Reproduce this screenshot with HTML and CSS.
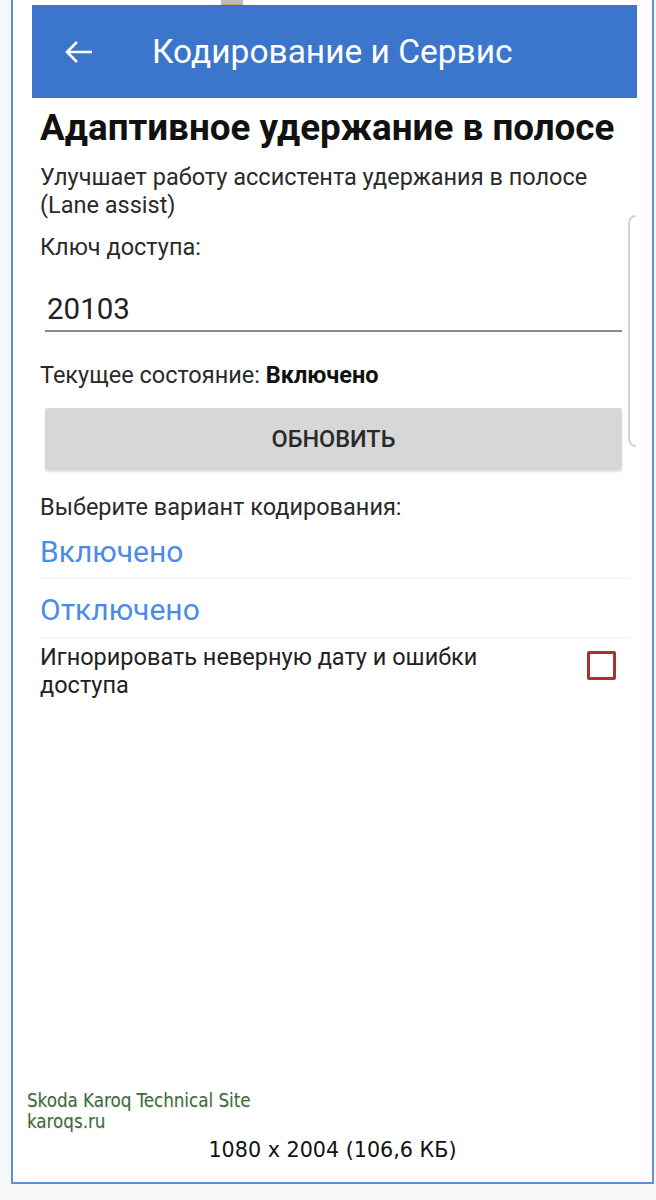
FILE: index.html
```html
<!DOCTYPE html>
<html lang="ru">
<head>
    <meta charset="UTF-8">
    <meta name="viewport" content="width=device-width, initial-scale=1.0">
    <title>Кодирование и Сервис</title>
    <link rel="stylesheet" href="styles.css">
</head>
<body>
    <div class="frame">
        <div class="thumb-top"></div>
        <div class="screen">
            <header class="appbar">
                <svg class="back" width="30" height="26" viewBox="0 0 30 26">
                    <path d="M28 13H3M13 3L3 13l10 10" fill="none" stroke="#fff" stroke-width="2.6"/>
                </svg>
                <span class="appbar-title">Кодирование и Сервис</span>
            </header>
            <div class="content">
                <h1 class="heading">Адаптивное удержание в полосе</h1>
                <p class="desc">Улучшает работу ассистента удержания в полосе (Lane assist)</p>
                <div class="scroll-hint"></div>
                <p class="label">Ключ доступа:</p>
                <div class="field">20103</div>
                <p class="state">Текущее состояние: <b>Включено</b></p>
                <button class="refresh">ОБНОВИТЬ</button>
                <p class="label choose">Выберите вариант кодирования:</p>
                <ul class="options">
                    <li>Включено</li>
                    <li>Отключено</li>
                </ul>
                <div class="ignore">
                    <span>Игнорировать неверную дату и ошибки доступа</span>
                    <span class="checkbox"></span>
                </div>
            </div>
        </div>
        <div class="caption">
            <div class="site">Skoda Karoq Technical Site<br>karoqs.ru</div>
            <div class="size">1080 x 2004 (106,6 КБ)</div>
        </div>
    </div>
</body>
</html>
```

FILE: styles.css
```css
body {
    margin: 0;
    background: #f6f7f9;
    font-family: Roboto, "Noto Sans", sans-serif;
}
.frame {
    position: relative;
    margin-left: 11px;
    width: 639px;
    height: 1182px;
    background: #fff;
    border: 2px solid #5f8fd8;
    border-top: none;
}
.thumb-top {
    position: absolute;
    left: 208px;
    top: 0;
    width: 22px;
    height: 4px;
    background: #b9bcc4;
    border-bottom: 1px solid #d6a26a;
}
.screen {
    padding-top: 5px;
    margin-left: 19px;
    width: 605px;
}
.appbar {
    height: 93px;
    background: #3b76cc;
    display: flex;
    align-items: center;
    color: #fff;
}
.back {
    margin-left: 32px;
    margin-right: 58px;
}
.appbar-title {
    font-size: 33.5px;
}
.content {
    position: relative;
    padding: 0 8px;
    color: #222;
}
.heading {
    margin: 10px 0 0 0;
    font-size: 36.8px;
    line-height: 40px;
    font-weight: bold;
    color: #111;
    white-space: nowrap;
}
.desc {
    margin: 15px 0 0 0;
    font-size: 23.5px;
    line-height: 28px;
    color: #2a2a2a;
    width: 560px;
}
.scroll-hint {
    position: absolute;
    right: 1px;
    top: 107px;
    width: 6px;
    height: 228px;
    border: 2px solid #d3d3d3;
    border-right: none;
    border-radius: 8px 0 0 8px;
}
.label {
    margin: 14px 0 0 0;
    font-size: 23.5px;
    line-height: 28px;
    color: #2a2a2a;
}
.field {
    margin: 31px 0 0 5px;
    width: 575px;
    padding: 0 0 4px 2px;
    font-size: 29.5px;
    line-height: 34px;
    color: #222;
    border-bottom: 2px solid #8a8a8a;
}
.state {
    margin: 29px 0 0 0;
    font-size: 23.5px;
    line-height: 28px;
    color: #2a2a2a;
}
.state b {
    color: #111;
}
.refresh {
    display: block;
    margin: 19px 0 0 5px;
    width: 577px;
    height: 62px;
    border: none;
    border-radius: 3px;
    background: #d7d7d7;
    font-family: Roboto, sans-serif;
    font-size: 23.5px;
    font-weight: 500;
    color: #2a2a2a;
    box-shadow: 0 2px 2px rgba(0, 0, 0, 0.12);
}
.choose {
    margin-top: 23px;
}
.options {
    list-style: none;
    margin: 11px 0 0 0;
    padding: 0;
}
.options li {
    padding-top: 4px;
    font-size: 30px;
    line-height: 54px;
    color: #4a8ce6;
    border-bottom: 1px solid #eeeeee;
}
.options li:first-child {
    padding: 0 0 6px 0;
    line-height: 40px;
}
.ignore {
    display: flex;
    align-items: flex-start;
    justify-content: space-between;
    margin-top: 5px;
    font-size: 23.5px;
    line-height: 28px;
    color: #222;
}
.ignore span:first-child {
    width: 470px;
}
.checkbox {
    margin: 8px 13px 0 0;
    width: 23px;
    height: 23px;
    border: 3px solid #a83232;
    border-radius: 2px;
}
.caption {
    position: absolute;
    left: 0;
    right: 0;
    bottom: 20px;
}
.site {
    margin-left: 14px;
    font-family: "DejaVu Sans Condensed", "DejaVu Sans", sans-serif;
    font-size: 18.6px;
    line-height: 21px;
    color: #3b6a3a;
    text-shadow: 1px 1px 1px #e8e8e8;
}
.size {
    margin-top: 6px;
    text-align: center;
    font-family: "DejaVu Sans", Verdana, sans-serif;
    font-size: 20.7px;
    color: #111;
}
```
